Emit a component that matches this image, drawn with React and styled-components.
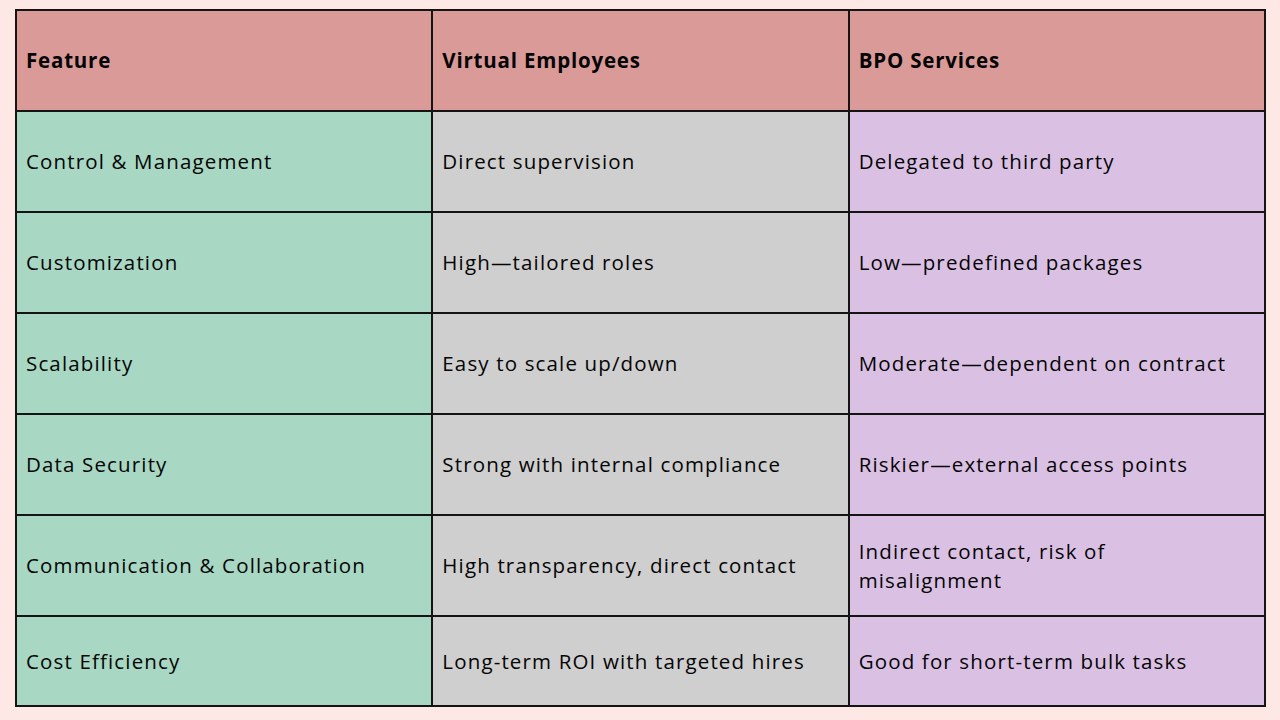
import React from "react";
import styled, { createGlobalStyle } from "styled-components";

const GlobalStyle = createGlobalStyle`
  html, body {
    margin: 0;
    padding: 0;
    background: #fde8e6;
  }
  body {
    font-family: "Open Sans", "Liberation Sans", sans-serif;
    color: #050505;
  }
`;

const Page = styled.div`
  width: 1280px;
  height: 720px;
  box-sizing: border-box;
  padding: 9px 14px 0 15px;
  background: #fde8e6;
`;

const Table = styled.div`
  display: grid;
  grid-template-columns: repeat(3, 1fr);
  grid-template-rows: repeat(6, 99px) 88px;
  gap: 2px;
  padding: 2px;
  background: #141414;
  width: 1251px;
  box-sizing: border-box;
`;

const cellColors = {
  head: "#d99a98",
  feature: "#a8d7c3",
  virtual: "#cfcfcf",
  bpo: "#dac1e4",
};

const Cell = styled.div`
  display: flex;
  align-items: center;
  padding: 0 20px 0 9px;
  background: ${(props) => cellColors[props.tone]};
  font-size: 20.5px;
  line-height: 29px;
  font-weight: ${(props) => (props.tone === "head" ? 700 : 500)};
  letter-spacing: ${(props) => (props.tone === "head" ? "0.8px" : "1.15px")};
`;

const rows = [
  ["Control & Management", "Direct supervision", "Delegated to third party"],
  ["Customization", "High—tailored roles", "Low—predefined packages"],
  ["Scalability", "Easy to scale up/down", "Moderate—dependent on contract"],
  ["Data Security", "Strong with internal compliance", "Riskier—external access points"],
  [
    "Communication & Collaboration",
    "High transparency, direct contact",
    "Indirect contact, risk of misalignment",
  ],
  ["Cost Efficiency", "Long-term ROI with targeted hires", "Good for short-term bulk tasks"],
];

const App = () => {
  return (
    <>
      <GlobalStyle />
      <Page>
        <Table>
          {/* Header */}
          <Cell tone="head">Feature</Cell>
          <Cell tone="head">Virtual Employees</Cell>
          <Cell tone="head">BPO Services</Cell>
          {rows.map(([feature, virtual, bpo]) => (
            <React.Fragment key={feature}>
              <Cell tone="feature">{feature}</Cell>
              <Cell tone="virtual">{virtual}</Cell>
              <Cell tone="bpo">{bpo}</Cell>
            </React.Fragment>
          ))}
        </Table>
      </Page>
    </>
  );
};

export default App;
